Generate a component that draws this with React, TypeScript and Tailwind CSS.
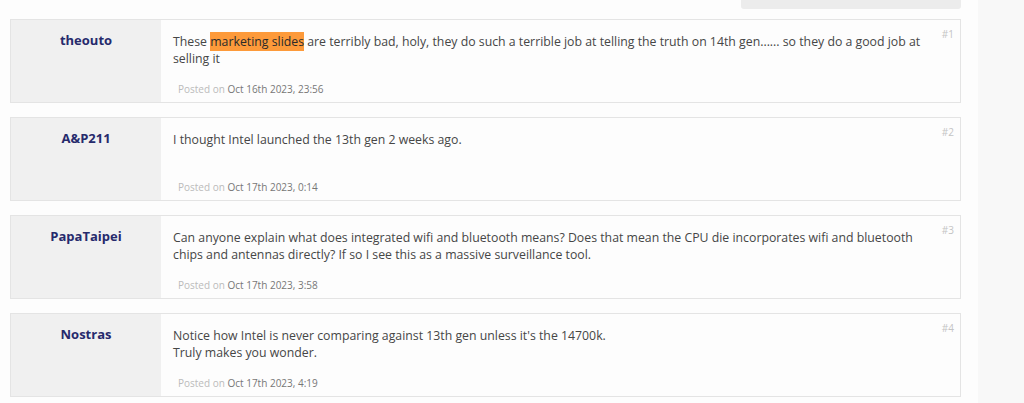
const posts = [
  {
    id: 1,
    user: "theouto",
    body: (
      <>
        These <span className="bg-[#fd9a3a] py-[1px] text-[#2a2a2a]">marketing slides</span> are terribly bad, holy, they do such a terrible job at telling the truth on 14th gen...... so they do a good job at selling it
      </>
    ),
    date: "Oct 16th 2023, 23:56",
  },
  {
    id: 2,
    user: "A&P211",
    body: <>I thought Intel launched the 13th gen 2 weeks ago.</>,
    date: "Oct 17th 2023, 0:14",
  },
  {
    id: 3,
    user: "PapaTaipei",
    body: (
      <>
        Can anyone explain what does integrated wifi and bluetooth means? Does that mean the CPU die incorporates wifi and bluetooth chips and antennas directly? If so I see this as a massive surveillance tool.
      </>
    ),
    date: "Oct 17th 2023, 3:58",
  },
  {
    id: 4,
    user: "Nostras",
    body: (
      <>
        Notice how Intel is never comparing against 13th gen unless it's the 14700k.
        <br />
        Truly makes you wonder.
      </>
    ),
    date: "Oct 17th 2023, 4:19",
  },
];

function Post({ p }: { p: (typeof posts)[number] }) {
  return (
    <div className="flex h-[84px] border border-[#e4e4e4] bg-[#fdfdfd]">
      <div className="w-[150px] shrink-0 bg-[#f0f0f0] pt-[11px] text-center text-[13px] font-bold text-[#262a6c]">
        {p.user}
      </div>
      <div className="relative flex flex-1 flex-col pl-[12px] pr-[30px] pt-[13px]">
        <span className="absolute right-[6px] top-[7px] text-[10px] text-[#c4c4c4]">#{p.id}</span>
        <div className="text-[12.3px] leading-[17px] text-[#464646]">{p.body}</div>
        <div className="mt-auto pb-[5px] pl-[5px] text-[10px] text-[#777]">
          <span className="text-[#bbb]">Posted on</span> {p.date}
        </div>
      </div>
    </div>
  );
}

export default function App() {
  return (
    <div className="flex h-[403px] w-[1024px] overflow-hidden bg-[#fdfdfd] font-['Open_Sans',sans-serif]">
      <main className="w-[961px] shrink-0 pl-[10px]">
        <div className="flex h-[19px] items-start justify-end">
          <div className="h-[9px] w-[220px] rounded-b-[3px] bg-[#ececec]" />
        </div>
        <div className="flex flex-col gap-[14px]">
          {posts.map(p => (
            <Post key={p.id} p={p} />
          ))}
        </div>
      </main>
      <aside className="ml-[17px] flex-1 bg-[#f8f8f8]" />
    </div>
  );
}
